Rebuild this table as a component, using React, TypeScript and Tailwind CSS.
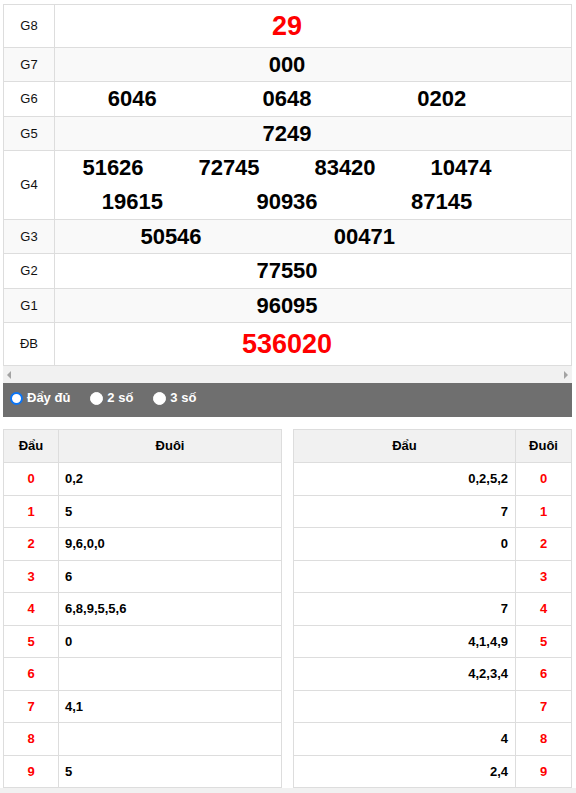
import { useState } from 'react'

// ── Data ─────────────────────────────────────────────────────────────────────
type Prize = { label: string; rows: string[][]; red?: boolean; big?: boolean; h: string }

const PRIZES: Prize[] = [
  { label: 'G8', rows: [['29']], red: true, big: true, h: 'h-[43px]' },
  { label: 'G7', rows: [['000']], h: 'h-[34px]' },
  { label: 'G6', rows: [['6046', '0648', '0202']], h: 'h-[35px]' },
  { label: 'G5', rows: [['7249']], h: 'h-[34px]' },
  { label: 'G4', rows: [['51626', '72745', '83420', '10474'], ['19615', '90936', '87145']], h: 'h-[69px]' },
  { label: 'G3', rows: [['50546', '00471']], h: 'h-[34px]' },
  { label: 'G2', rows: [['77550']], h: 'h-[35px]' },
  { label: 'G1', rows: [['96095']], h: 'h-[34px]' },
  { label: 'ĐB', rows: [['536020']], red: true, big: true, h: 'h-[43px]' },
]

const DAU = ['0,2', '5', '9,6,0,0', '6', '6,8,9,5,5,6', '0', '', '4,1', '', '5']
const DUOI = ['0,2,5,2', '7', '0', '', '7', '4,1,4,9', '4,2,3,4', '', '4', '2,4']

const FONT = "font-['Liberation_Sans',Arial,sans-serif]"

// ── Prize row ────────────────────────────────────────────────────────────────
const NumberLine = ({ nums, red, big, g3 }: { nums: string[]; red?: boolean; big?: boolean; g3?: boolean }) => {
  const cls = `font-bold leading-none ${red ? 'text-[#ff0000]' : 'text-black'} ${big ? 'text-[27px]' : 'text-[22px]'}`
  if (g3) {
    return (
      <div className="grid grid-cols-12">
        <span className={`col-span-6 text-center ${cls}`}>{nums[0]}</span>
        <span className={`col-span-4 text-center ${cls}`}>{nums[1]}</span>
      </div>
    )
  }
  return (
    <div className="flex">
      {nums.map((n) => (
        <span key={n} className={`flex-1 text-center ${cls}`}>{n}</span>
      ))}
    </div>
  )
}

const PrizeRow = ({ p, idx }: { p: Prize; idx: number }) => (
  <div className={`flex border-b border-[#dddddd] ${p.h} ${idx % 2 === 1 ? 'bg-[#f9f9f9]' : 'bg-white'}`}>
    <div className="w-[51px] shrink-0 border-r border-[#dddddd] flex items-center justify-center text-[13px] text-[#111]">
      {p.label}
    </div>
    <div className="flex-1 pr-[52px] flex flex-col justify-center gap-[12px]">
      {p.rows.map((r, i) => (
        <NumberLine key={i} nums={r} red={p.red} big={p.big} g3={p.label === 'G3'} />
      ))}
    </div>
  </div>
)

// ── Loto tables ──────────────────────────────────────────────────────────────
const HeadCell = ({ children, className = '' }: { children: string; className?: string }) => (
  <div className={`h-[33px] flex items-center justify-center font-bold text-[13px] text-black bg-[#f1f1f1] border-b border-[#dddddd] ${className}`}>
    {children}
  </div>
)

const LeftLoto = () => (
  <div className="w-[279px] border border-[#dddddd] border-b-0">
    <div className="flex">
      <HeadCell className="w-[55px] border-r">Đẩu</HeadCell>
      <HeadCell className="flex-1">Đuôi</HeadCell>
    </div>
    {DAU.map((v, i) => (
      <div key={i} className="flex h-[32.5px] border-b border-[#dddddd] text-[13px] font-bold">
        <div className="w-[55px] border-r border-[#dddddd] flex items-center justify-center text-[#ff0000]">{i}</div>
        <div className="flex-1 flex items-center pl-[6px] text-black">{v}</div>
      </div>
    ))}
  </div>
)

const RightLoto = () => (
  <div className="w-[279px] border border-[#dddddd] border-b-0">
    <div className="flex">
      <HeadCell className="flex-1 border-r">Đẩu</HeadCell>
      <HeadCell className="w-[55px]">Đuôi</HeadCell>
    </div>
    {DUOI.map((v, i) => (
      <div key={i} className="flex h-[32.5px] border-b border-[#dddddd] text-[13px] font-bold">
        <div className="flex-1 border-r border-[#dddddd] flex items-center justify-end pr-[7px] text-black">{v}</div>
        <div className="w-[55px] flex items-center justify-center text-[#ff0000]">{i}</div>
      </div>
    ))}
  </div>
)

// ── Radio ────────────────────────────────────────────────────────────────────
const Radio = ({ checked, label, onClick }: { checked: boolean; label: string; onClick: () => void }) => (
  <button onClick={onClick} className="flex items-center gap-[4px] text-white font-bold text-[13px] cursor-pointer">
    <span
      className={`w-[13px] h-[13px] rounded-full bg-white ${checked ? 'border-2 border-[#0b75f5]' : 'border border-white'}`}
    />
    {label}
  </button>
)

// ── Page ─────────────────────────────────────────────────────────────────────
export default function App() {
  const [mode, setMode] = useState(0)

  return (
    <div className={`${FONT} bg-white w-[576px] min-h-[793px]`}>
      <div className="pt-[4px] px-[3px] pr-[4px]">
        <div className="border-l border-r border-t border-[#dddddd]">
          {PRIZES.map((p, i) => (
            <PrizeRow key={p.label} p={p} idx={i} />
          ))}
        </div>
        {/* scrollbar */}
        <div className="h-[17px] bg-[#f1f1f1] flex items-center justify-between px-[4px]">
          <span className="w-0 h-0 border-y-[4px] border-y-transparent border-r-[4px] border-r-[#a3a3a3]" />
          <span className="w-0 h-0 border-y-[4px] border-y-transparent border-l-[4px] border-l-[#a3a3a3]" />
        </div>
      </div>

      <div className="mx-[3px] mr-[4px] h-[34px] bg-[#6f6f6f] flex items-center gap-[20px] pl-[7px] pb-[4px]">
        <Radio checked={mode === 0} label="Đẩy đủ" onClick={() => setMode(0)} />
        <Radio checked={mode === 1} label="2 số" onClick={() => setMode(1)} />
        <Radio checked={mode === 2} label="3 số" onClick={() => setMode(2)} />
      </div>

      <div className="mt-[12px] mx-[3px] mr-[4px] flex justify-between">
        <LeftLoto />
        <RightLoto />
      </div>
      <div className="h-[6px] bg-[#f1f1f1]" />
    </div>
  )
}
